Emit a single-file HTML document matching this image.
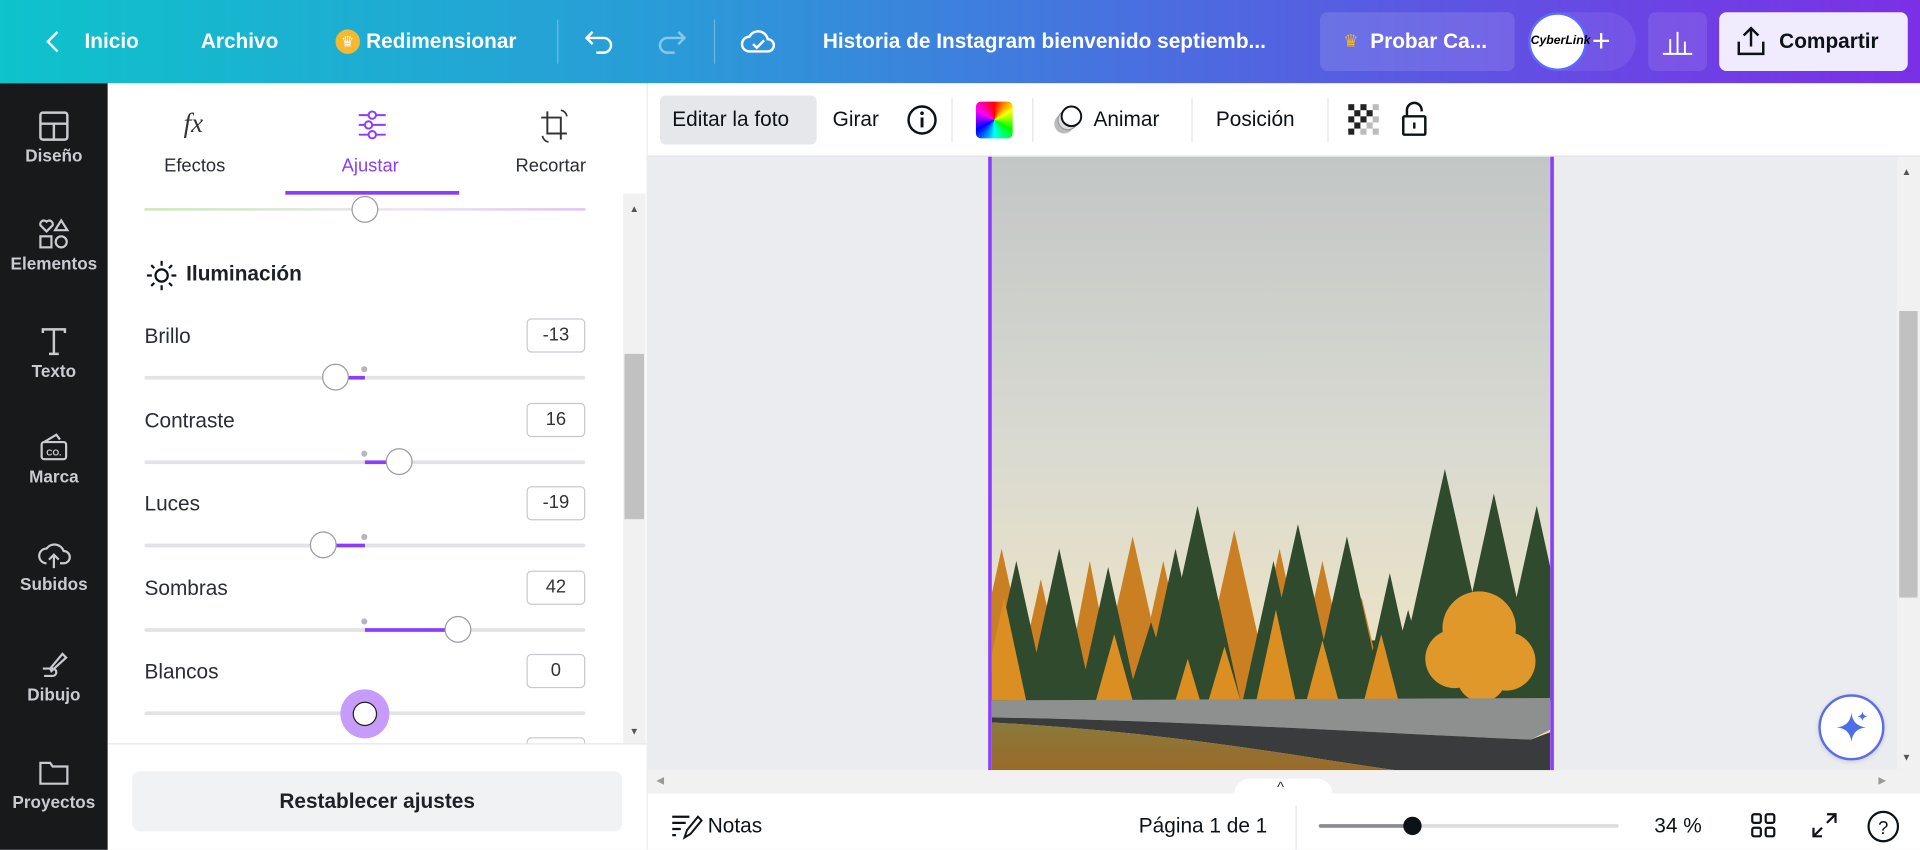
<!DOCTYPE html>
<html><head><meta charset="utf-8"><style>
*{box-sizing:border-box;margin:0;padding:0}
html,body{width:1920px;height:850px;overflow:hidden;background:#ebecf0}
#w{position:absolute;left:0;top:0;width:1568px;height:694px;transform:scale(1.22449);transform-origin:0 0;font-family:"Liberation Sans",sans-serif;color:#0d1216}
.a{position:absolute}
.top{left:0;top:0;width:1568px;height:68px;background:linear-gradient(90deg,#0ec3cb 0%,#2a9bd8 35%,#4a6ee0 60%,#6a45e4 85%,#7b30e6 100%)}
.tt{color:#fff;font-weight:bold;font-size:17px;top:24px}
.side{left:0;top:68px;width:88px;height:626px;background:#18191b}
.si{width:88px;text-align:center;color:#c9cbd0;font-size:14px;font-weight:bold}
.panel{left:88px;top:68px;width:440px;height:626px;background:#fff}
.lbl{font-size:17px;color:#2a2d33;left:118px}
.box{left:430px;width:48px;height:28px;border:1px solid #c7c9cf;border-radius:4px;font-size:15px;text-align:center;line-height:26px;color:#333}
.trk{left:118px;width:360px;height:3px;background:#e2e3e6;border-radius:2px}
.th{width:22px;height:22px;border-radius:50%;background:#fff;border:1px solid #9a9ca3}
.dot{width:5px;height:5px;border-radius:50%;background:#b5b7bc}
.pur{height:3px;background:#8b3dff}
.tb{font-size:17px;color:#0d1216;top:88px}
</style></head><body><div id="w">
<div class="a top"></div>
<svg class="a" style="left:36px;top:24px" width="14" height="20"><path d="M11 2L3 10l8 8" stroke="#fff" stroke-width="2" fill="none"/></svg>
<div class="a tt" style="left:69px">Inicio</div>
<div class="a tt" style="left:164px">Archivo</div>
<div class="a" style="left:274px;top:24px;width:20px;height:20px;border-radius:50%;background:#f5b82e;color:#fff;font-size:12px;text-align:center;line-height:20px">♛</div>
<div class="a tt" style="left:299px">Redimensionar</div>
<div class="a" style="left:455px;top:16px;width:1px;height:36px;background:rgba(255,255,255,.3)"></div>
<svg class="a" style="left:476px;top:22px" width="28" height="24"><path d="M8 4L3 9l5 5M3 9h14a6 6 0 0 1 0 12h-6" stroke="#fff" stroke-width="2" fill="none"/></svg>
<svg class="a" style="left:534px;top:22px" width="28" height="24" opacity=".45"><path d="M20 4l5 5-5 5M25 9H11a6 6 0 0 0 0 12h6" stroke="#fff" stroke-width="2" fill="none"/></svg>
<div class="a" style="left:583px;top:16px;width:1px;height:36px;background:rgba(255,255,255,.3)"></div>
<svg class="a" style="left:604px;top:20px" width="30" height="28"><path d="M8 22a6 6 0 0 1 0-12 8 8 0 0 1 15 2 5 5 0 0 1 0 10z" stroke="#fff" stroke-width="2" fill="none"/><path d="M11 16l3 3 6-6" stroke="#fff" stroke-width="2" fill="none"/></svg>
<div class="a tt" style="left:672px">Historia de Instagram bienvenido septiemb...</div>
<div class="a" style="left:1078px;top:10px;width:159px;height:48px;border-radius:6px;background:rgba(255,255,255,.12)"></div>
<div class="a" style="left:1097px;top:25px;color:#f5b82e;font-size:14px">♛</div>
<div class="a tt" style="left:1119px">Probar Ca...</div>
<div class="a" style="left:1250px;top:10px;width:86px;height:48px;border-radius:24px;background:rgba(255,255,255,.08)"></div>
<div class="a" style="left:1248px;top:10px;width:48px;height:48px;border-radius:50%;background:#fff;border:2px solid #5b6bff;font-size:10px;font-style:italic;font-weight:bold;text-align:center;line-height:44px;color:#000">CyberLink</div>
<div class="a" style="left:1300px;top:18px;color:#fff;font-size:26px">+</div>
<div class="a" style="left:1346px;top:10px;width:48px;height:48px;border-radius:6px;background:rgba(255,255,255,.1)"></div>
<svg class="a" style="left:1356px;top:22px" width="28" height="24"><path d="M2 22h24M8 22V10M14 22V4M20 22V12" stroke="#fff" stroke-width="1.6"/></svg>
<div class="a" style="left:1404px;top:10px;width:154px;height:48px;border-radius:6px;background:#f1ecfd"></div>
<svg class="a" style="left:1416px;top:20px" width="28" height="28"><path d="M4 14v10h20V14M14 18V3M8 9l6-6 6 6" stroke="#0d1216" stroke-width="2" fill="none"/></svg>
<div class="a" style="left:1453px;top:24px;font-size:17px;font-weight:bold">Compartir</div>

<div class="a side"></div>
<div class="a si" style="left:0;top:90px"><svg width="26" height="26"><rect x="2" y="2" width="22" height="22" rx="2" stroke="#c9cbd0" stroke-width="2" fill="none"/><path d="M2 11h22M13 11v13" stroke="#c9cbd0" stroke-width="2"/></svg><br>Diseño</div>
<div class="a si" style="left:0;top:178px"><svg width="28" height="26"><path d="M8 11l-5-5a3 3 0 0 1 5-3 3 3 0 0 1 5 3z" stroke="#c9cbd0" stroke-width="1.8" fill="none"/><path d="M20 2l5 8h-10z" stroke="#c9cbd0" stroke-width="1.8" fill="none"/><rect x="3" y="15" width="9" height="9" stroke="#c9cbd0" stroke-width="1.8" fill="none"/><circle cx="20" cy="19.5" r="4.5" stroke="#c9cbd0" stroke-width="1.8" fill="none"/></svg><br>Elementos</div>
<div class="a si" style="left:0;top:266px"><svg width="26" height="26"><path d="M4 6V3h18v3M13 3v20M9 23h8" stroke="#c9cbd0" stroke-width="2" fill="none"/></svg><br>Texto</div>
<div class="a si" style="left:0;top:352px"><svg width="26" height="26"><rect x="3" y="9" width="20" height="14" rx="2" stroke="#c9cbd0" stroke-width="1.8" fill="none"/><path d="M5 9l10-6 3 4" stroke="#c9cbd0" stroke-width="1.8" fill="none"/><text x="13" y="20" font-size="7" fill="#c9cbd0" text-anchor="middle" font-family="Liberation Sans">CO.</text></svg><br>Marca</div>
<div class="a si" style="left:0;top:440px"><svg width="28" height="26"><path d="M8 20a6 6 0 0 1 0-12 8 8 0 0 1 14 2 5 5 0 0 1 0 10h-3" stroke="#c9cbd0" stroke-width="1.8" fill="none"/><path d="M14 24V13M10 17l4-4 4 4" stroke="#c9cbd0" stroke-width="1.8" fill="none"/></svg><br>Subidos</div>
<div class="a si" style="left:0;top:530px"><svg width="26" height="26"><path d="M10 16l10-12 3 3-12 11z" stroke="#c9cbd0" stroke-width="1.8" fill="none"/><path d="M4 16h8a3 3 0 0 1 0 6H5" stroke="#c9cbd0" stroke-width="1.8" fill="none"/></svg><br>Dibujo</div>
<div class="a si" style="left:0;top:618px"><svg width="28" height="26"><path d="M3 5h8l2 3h12v14H3z" stroke="#c9cbd0" stroke-width="1.8" fill="none"/></svg><br>Proyectos</div>

<div class="a panel"></div>
<div class="a" style="left:150px;top:88px;font-family:'Liberation Serif',serif;font-style:italic;font-size:22px;color:#333">fx</div>
<div class="a" style="left:134px;top:127px;font-size:15px;color:#2a2d33">Efectos</div>
<svg class="a" style="left:291px;top:89px" width="26" height="26"><path d="M2 5h22M2 13h22M2 21h22" stroke="#8b3dff" stroke-width="1.6"/><circle cx="13" cy="5" r="3" fill="#fff" stroke="#8b3dff" stroke-width="1.6"/><circle cx="10" cy="13" r="3" fill="#fff" stroke="#8b3dff" stroke-width="1.6"/><circle cx="13" cy="21" r="3" fill="#fff" stroke="#8b3dff" stroke-width="1.6"/></svg>
<div class="a" style="left:279px;top:127px;font-size:15px;color:#8b3dff">Ajustar</div>
<svg class="a" style="left:439px;top:88px" width="28" height="30"><path d="M8 3v18h16M3 8h16v18" stroke="#333" stroke-width="1.6" fill="none"/><path d="M19 2a6 6 0 0 1 5 5M9 28a6 6 0 0 1-5-5" stroke="#333" stroke-width="1.4" fill="none"/></svg>
<div class="a" style="left:421px;top:127px;font-size:15px;color:#2a2d33">Recortar</div>
<div class="a" style="left:233px;top:156px;width:142px;height:3px;background:#8b3dff"></div>

<div class="a" style="left:118px;top:170px;width:360px;height:2px;background:linear-gradient(90deg,#c8eab2,#ece2f5 60%,#e0c0f2)"></div>
<div class="a th" style="left:287px;top:160px"></div>

<svg class="a" style="left:118px;top:211px" width="28" height="28"><circle cx="14" cy="14" r="5" stroke="#0d1216" stroke-width="1.8" fill="none"/><path d="M14 2v4M14 22v4M2 14h4M22 14h4M5.5 5.5l2.5 2.5M20 20l2.5 2.5M5.5 22.5L8 20M20 8l2.5-2.5" stroke="#0d1216" stroke-width="1.8"/></svg>
<div class="a" style="left:152px;top:214px;font-size:17px;font-weight:bold;color:#1d2126">Iluminación</div>

<div class="a lbl" style="top:265px">Brillo</div><div class="a box" style="top:260px">-13</div>
<div class="a trk" style="top:307px"></div><div class="a pur" style="left:284px;width:14px;top:307px"></div><div class="a dot" style="left:295px;top:299px"></div><div class="a th" style="left:263px;top:297px"></div>

<div class="a lbl" style="top:334px">Contraste</div><div class="a box" style="top:329px">16</div>
<div class="a trk" style="top:376px"></div><div class="a pur" style="left:298px;width:20px;top:376px"></div><div class="a dot" style="left:295px;top:368px"></div><div class="a th" style="left:315px;top:366px"></div>

<div class="a lbl" style="top:402px">Luces</div><div class="a box" style="top:397px">-19</div>
<div class="a trk" style="top:444px"></div><div class="a pur" style="left:272px;width:26px;top:444px"></div><div class="a dot" style="left:295px;top:436px"></div><div class="a th" style="left:253px;top:434px"></div>

<div class="a lbl" style="top:471px">Sombras</div><div class="a box" style="top:466px">42</div>
<div class="a trk" style="top:513px"></div><div class="a pur" style="left:298px;width:70px;top:513px"></div><div class="a dot" style="left:295px;top:505px"></div><div class="a th" style="left:363px;top:503px"></div>

<div class="a lbl" style="top:539px">Blancos</div><div class="a box" style="top:534px">0</div>
<div class="a trk" style="top:581px"></div>
<div class="a" style="left:278px;top:563px;width:40px;height:40px;border-radius:50%;background:#c79bf9"></div>
<div class="a" style="left:288px;top:573px;width:20px;height:20px;border-radius:50%;background:#fff;border:1px solid #222"></div>
<div class="a box" style="top:602px;height:6px;border-bottom:none;border-radius:4px 4px 0 0"></div>

<div class="a" style="left:509px;top:158px;width:18px;height:449px;background:#f1f1f1"></div>
<div class="a" style="left:510px;top:289px;width:16px;height:135px;background:#c1c1c1"></div>
<div class="a" style="left:514px;top:166px;font-size:8px;color:#555">▲</div>
<div class="a" style="left:514px;top:593px;font-size:8px;color:#555">▼</div>
<div class="a" style="left:88px;top:607px;width:440px;height:1px;background:#e4e5e8"></div>
<div class="a" style="left:108px;top:630px;width:400px;height:49px;border-radius:6px;background:#f1f2f4;text-align:center;line-height:49px;font-size:17px;font-weight:bold;color:#1d2126">Restablecer ajustes</div>

<!-- toolbar -->
<div class="a" style="left:529px;top:68px;width:1039px;height:60px;background:#fff;border-bottom:1px solid #dfe1e5"></div>
<div class="a" style="left:539px;top:78px;width:128px;height:40px;border-radius:5px;background:#e5e7eb"></div>
<div class="a tb" style="left:549px">Editar la foto</div>
<div class="a tb" style="left:680px">Girar</div>
<svg class="a" style="left:740px;top:85px" width="26" height="26"><circle cx="13" cy="13" r="11" stroke="#0d1216" stroke-width="2" fill="none"/><path d="M13 11v8" stroke="#0d1216" stroke-width="2.4"/><circle cx="13" cy="7.5" r="1.5" fill="#0d1216"/></svg>
<div class="a" style="left:777px;top:80px;width:1px;height:36px;background:#e3e4e7"></div>
<div class="a" style="left:797px;top:83px;width:30px;height:30px;border-radius:4px;background:conic-gradient(#f00,#ff0,#0f0,#0ff,#00f,#f0f,#f00)"></div>
<div class="a" style="left:843px;top:80px;width:1px;height:36px;background:#e3e4e7"></div>
<svg class="a" style="left:858px;top:84px" width="30" height="30"><circle cx="11" cy="17" r="8" fill="#bbb"/><circle cx="14" cy="14" r="8" fill="#ddd" stroke="#999"/><circle cx="17" cy="11" r="8" fill="#fff" stroke="#0d1216" stroke-width="1.6"/></svg>
<div class="a tb" style="left:893px">Animar</div>
<div class="a" style="left:973px;top:80px;width:1px;height:36px;background:#e3e4e7"></div>
<div class="a tb" style="left:993px">Posición</div>
<div class="a" style="left:1084px;top:80px;width:1px;height:36px;background:#e3e4e7"></div>
<svg class="a" style="left:1101px;top:85px" width="26" height="26"><g fill="#222"><rect x="0" y="0" width="5" height="5"/><rect x="10" y="0" width="5" height="5"/><rect x="5" y="5" width="5" height="5"/><rect x="15" y="5" width="5" height="5"/><rect x="0" y="10" width="5" height="5"/><rect x="10" y="10" width="5" height="5"/><rect x="5" y="15" width="5" height="5"/><rect x="0" y="20" width="5" height="5"/></g><g fill="#bbb"><rect x="20" y="0" width="5" height="5"/><rect x="20" y="10" width="5" height="5"/><rect x="15" y="15" width="5" height="5"/><rect x="10" y="20" width="5" height="5"/><rect x="20" y="20" width="5" height="5"/></g></svg>
<svg class="a" style="left:1143px;top:82px" width="24" height="30"><path d="M6 13V8a6 6 0 0 1 12 0v1" stroke="#0d1216" stroke-width="2" fill="none"/><rect x="3" y="13" width="18" height="15" rx="1" stroke="#0d1216" stroke-width="2" fill="none"/><path d="M12 18v5" stroke="#0d1216" stroke-width="2"/></svg>

<!-- image -->
<div class="a" style="left:807px;top:128px;width:3px;height:501px;background:#8b3dff"></div>
<div class="a" style="left:1266px;top:128px;width:3px;height:501px;background:#8b3dff"></div>
<svg class="a" style="left:810px;top:128px" width="456" height="501" viewBox="0 0 456 501" preserveAspectRatio="none">
<defs><linearGradient id="sk" x1="0" y1="0" x2="0" y2="1"><stop offset="0" stop-color="#c2c6c5"/><stop offset=".45" stop-color="#d8d9d1"/><stop offset=".8" stop-color="#ebe3c6"/><stop offset="1" stop-color="#efdcae"/></linearGradient>
<linearGradient id="gr" x1="0" y1="0" x2="0" y2="1"><stop offset="0" stop-color="#8a7a3a"/><stop offset="1" stop-color="#9a6a2a"/></linearGradient></defs>
<rect width="456" height="501" fill="url(#sk)"/>
<rect x="0" y="395" width="456" height="50" fill="#34452c"/>
<g fill="#c97f22">
<polygon points="8,320 35,444 -19,444"/><polygon points="40,345 62,444 18,444"/><polygon points="115,310 145,444 85,444"/><polygon points="140,330 165,444 115,444"/><polygon points="198,305 229,444 167,444"/><polygon points="235,320 262,444 208,444"/><polygon points="270,330 295,444 245,444"/><polygon points="302,360 322,444 282,444"/><polygon points="80,330 102,444 58,444"/>
</g>
<g fill="#2f4a2c">
<polygon points="20,330 45,444 -5,444"/><polygon points="55,320 82,444 28,444"/><polygon points="95,335 119,444 71,444"/><polygon points="150,320 177,444 123,444"/><polygon points="168,285 203,444 133,444"/><polygon points="230,330 255,444 205,444"/><polygon points="250,300 282,444 218,444"/><polygon points="290,310 320,444 260,444"/><polygon points="325,340 348,444 302,444"/><polygon points="370,255 412,444 328,444"/><polygon points="410,275 447,444 373,444"/><polygon points="445,285 480,444 410,444"/><polygon points="130,380 150,444 110,444"/><polygon points="340,370 360,444 320,444"/>
</g>
<g fill="#db8f22">
<polygon points="100,390 115,444 85,444"/><polygon points="190,400 203,444 177,444"/><polygon points="232,370 248,444 216,444"/><polygon points="270,395 283,444 257,444"/><polygon points="318,390 332,444 304,444"/><polygon points="10,360 28,444 -8,444"/><polygon points="160,410 170,444 150,444"/>
</g>
<g fill="#e0982a"><circle cx="398" cy="385" r="30"/><circle cx="378" cy="410" r="24"/><circle cx="420" cy="412" r="24"/><circle cx="400" cy="425" r="20"/></g>
<path d="M0 444 L456 442 V468 L440 476 C300 470 150 460 0 458Z" fill="#8e9090"/>
<path d="M0 458 C150 460 300 470 440 476 L456 470 V501 H330 C250 490 150 470 0 462Z" fill="#3a3b3d"/>
<path d="M0 462 C150 470 250 490 330 501 H0Z" fill="url(#gr)"/>
</svg>

<!-- scrollbars -->
<div class="a" style="left:1549px;top:128px;width:19px;height:501px;background:#f1f1f1"></div>
<div class="a" style="left:1551px;top:254px;width:15px;height:234px;background:#c1c1c1"></div>
<div class="a" style="left:1553px;top:136px;font-size:8px;color:#555">▲</div>
<div class="a" style="left:1553px;top:614px;font-size:8px;color:#555">▼</div>
<div class="a" style="left:529px;top:629px;width:1039px;height:19px;background:#f1f1f1"></div>
<div class="a" style="left:536px;top:633px;font-size:8px;color:#999">◀</div>
<div class="a" style="left:1534px;top:633px;font-size:8px;color:#999">▶</div>
<div class="a" style="left:1008px;top:636px;width:80px;height:14px;border-radius:12px 12px 0 0;background:#fff"></div>
<div class="a" style="left:1043px;top:636px;font-size:12px;color:#333">^</div>

<div class="a" style="left:1485px;top:567px;width:54px;height:54px;border-radius:50%;background:#fff;border:2px solid #5a6ee8;box-shadow:0 1px 4px rgba(0,0,0,.15)"></div>
<svg class="a" style="left:1496px;top:578px" width="32" height="32"><path d="M16 4 Q17 15 28 16 Q17 17 16 28 Q15 17 4 16 Q15 15 16 4Z" fill="#4d6ee8"/><path d="M25 3 Q25.4 6.6 29 7 Q25.4 7.4 25 11 Q24.6 7.4 21 7 Q24.6 6.6 25 3Z" fill="#4d6ee8"/></svg>

<!-- bottom bar -->
<div class="a" style="left:529px;top:648px;width:1039px;height:46px;background:#fff"></div>
<svg class="a" style="left:548px;top:664px" width="26" height="22"><path d="M1 3h14M1 8h11M1 13h7M1 18h3" stroke="#0d1216" stroke-width="1.8"/><path d="M11 20l2-6 9-11 3 3-9 11z" stroke="#0d1216" stroke-width="1.6" fill="none"/></svg>
<div class="a" style="left:578px;top:665px;font-size:17px">Notas</div>
<div class="a" style="left:930px;top:665px;font-size:17px">Página 1 de 1</div>
<div class="a" style="left:1058px;top:658px;width:1px;height:36px;background:#e3e4e7"></div>
<div class="a" style="left:1077px;top:673px;width:245px;height:3px;background:#dcdde0;border-radius:2px"></div>
<div class="a" style="left:1077px;top:673px;width:77px;height:3px;background:#8a8c92;border-radius:2px"></div>
<div class="a" style="left:1146px;top:667px;width:15px;height:15px;border-radius:50%;background:#0d1216"></div>
<div class="a" style="left:1351px;top:665px;font-size:17px">34 %</div>
<svg class="a" style="left:1429px;top:663px" width="22" height="22"><g stroke="#0d1216" stroke-width="1.8" fill="none"><rect x="2" y="2" width="7" height="7" rx="1.5"/><rect x="13" y="2" width="7" height="7" rx="1.5"/><rect x="2" y="13" width="7" height="7" rx="1.5"/><rect x="13" y="13" width="7" height="7" rx="1.5"/></g></svg>
<svg class="a" style="left:1478px;top:662px" width="24" height="24"><path d="M14 3h7v7M21 3l-7 7M10 21H3v-7M3 21l7-7" stroke="#0d1216" stroke-width="1.8" fill="none"/></svg>
<svg class="a" style="left:1524px;top:661px" width="28" height="28"><circle cx="14" cy="14" r="12" stroke="#0d1216" stroke-width="1.8" fill="none"/><text x="14" y="20" text-anchor="middle" font-size="15" font-family="Liberation Sans" fill="#0d1216">?</text></svg>
</div></body></html>
